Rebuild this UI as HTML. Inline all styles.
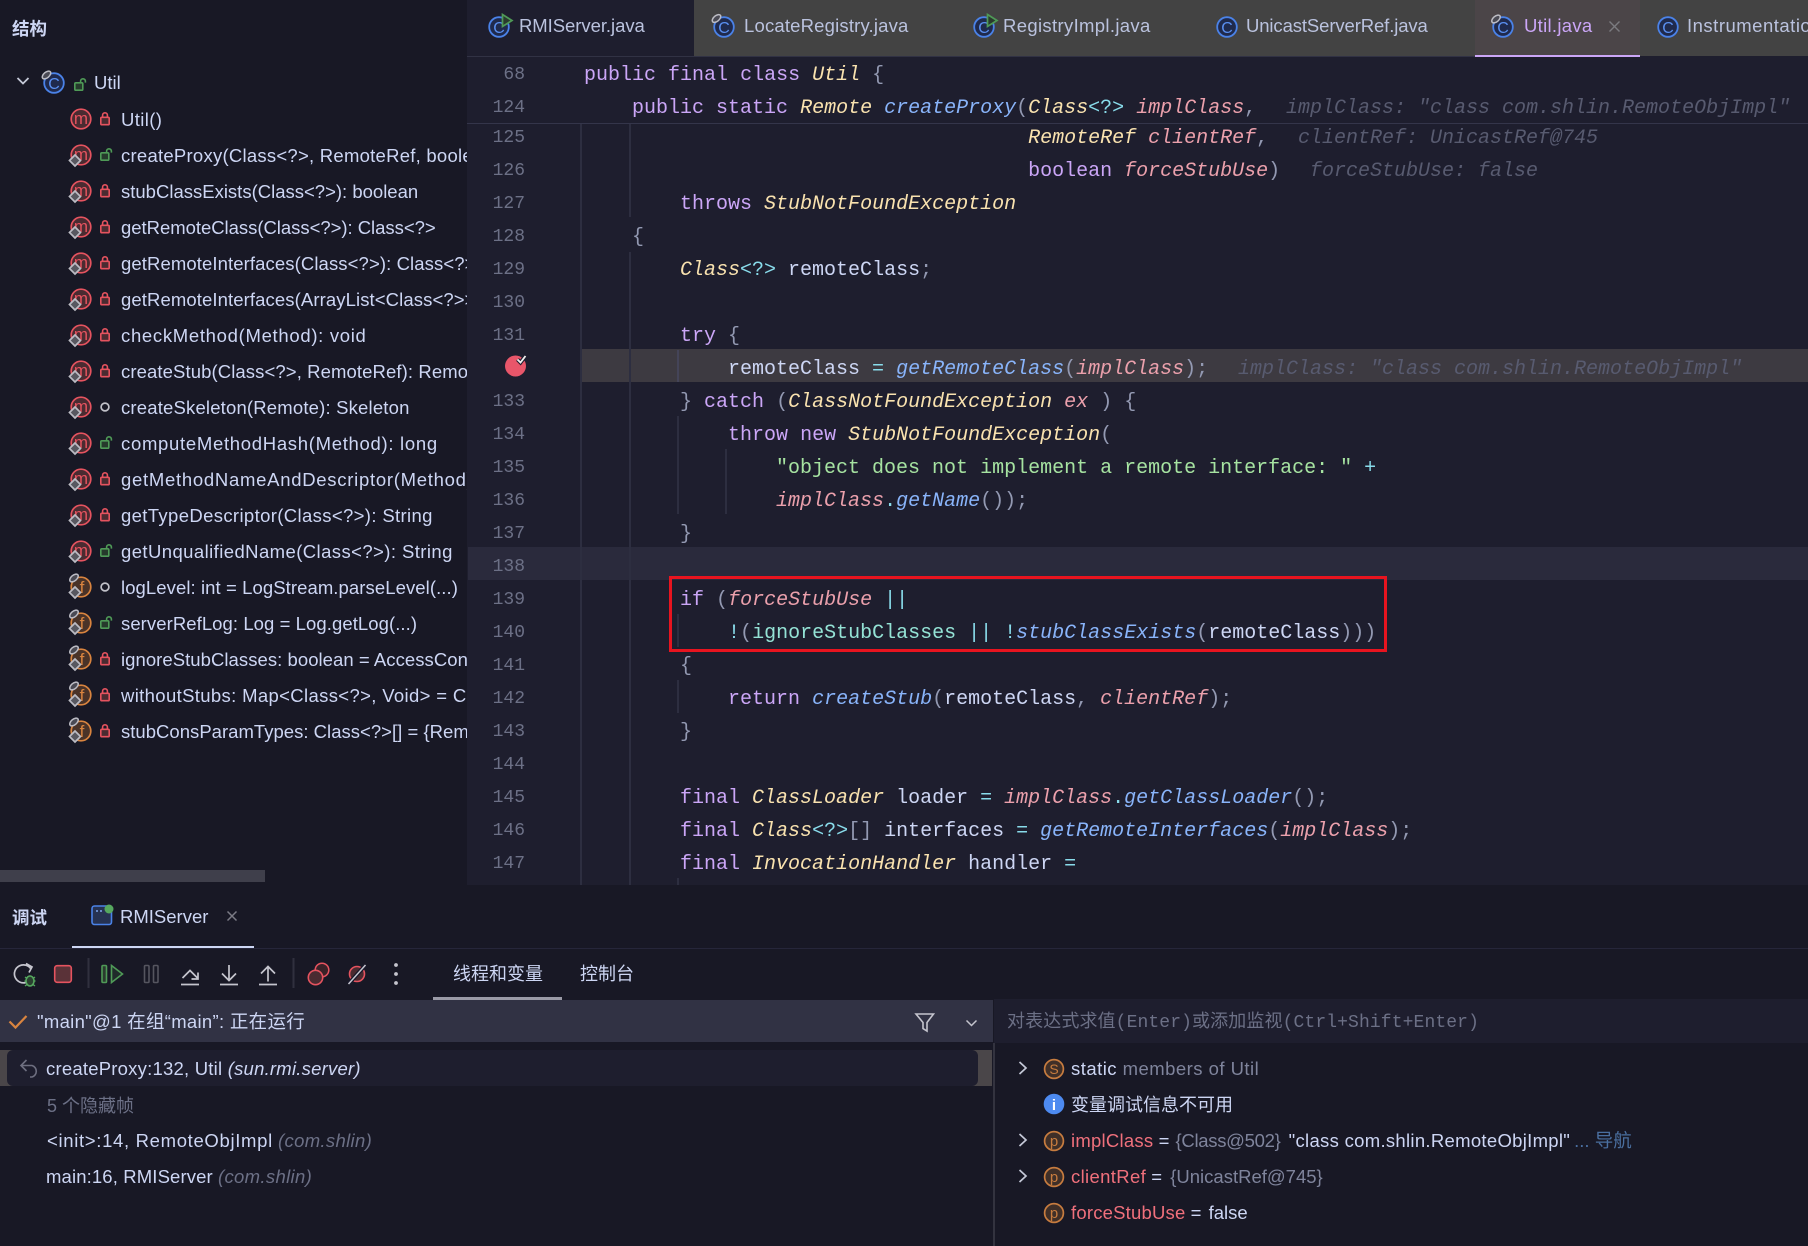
<!DOCTYPE html>
<html lang="zh">
<head>
<meta charset="utf-8">
<title>Util.java</title>
<style>
html,body{margin:0;padding:0;background:#181825;}
#root{position:relative;width:1808px;height:1246px;overflow:hidden;background:#181825;color:#cdd6f4;font-family:"Liberation Sans","Noto Sans CJK SC",sans-serif;font-size:18.5px;}
.a{position:absolute;}
.t{position:absolute;white-space:pre;line-height:24px;height:24px;}
#tree .t{margin-top:1px}
.c{position:absolute;left:584px;margin-top:2px;white-space:pre;font-family:"Liberation Mono","Noto Sans CJK SC",monospace;font-size:20px;line-height:33px;height:33px;color:#cdd6f4;}
.n{position:absolute;left:465px;margin-top:2px;width:60px;text-align:right;font-family:"Liberation Mono",monospace;font-size:18px;line-height:33px;height:33px;color:#6c7086;}
.g{position:absolute;width:2px;background:#2d2e40;}
.k{color:#cba6f7}
.y{color:#f9e2af;font-style:italic}
.b{color:#89b4fa;font-style:italic}
.r{color:#eba0ac;font-style:italic}
.p{color:#9399b2}
.o{color:#89dceb}
.s{color:#a6e3a1}
.f{color:#94e2d5}
.h{color:#585b70;font-style:italic;position:absolute;margin-top:2px;white-space:pre;font-family:"Liberation Mono",monospace;font-size:20px;line-height:33px;height:33px;}
.tab{color:#bac2de;}
.dim{color:#6c7086}
.i{font-style:italic;color:#6c7086;letter-spacing:.33px}
svg{position:absolute;left:0;top:0;overflow:visible}
svg text{font-family:"Liberation Sans",sans-serif}
</style>
</head>
<body>
<div id="root">

<!-- left structure panel -->
<div id="tree" class="a" style="left:0;top:0;width:467px;height:885px;background:#181825;overflow:hidden">
  <div class="t" style="left:12px;top:17px;margin-top:0;font-weight:bold;font-size:17.5px">结构</div>
  <div class="t" style="left:94px;top:71px;margin-top:0">Util</div>
  <div class="t" style="left:121px;top:107px;letter-spacing:.38px">Util()</div>
  <div class="t" style="left:121px;top:143px;letter-spacing:.25px">createProxy(Class&lt;?&gt;, RemoteRef, boolean, boolean)</div>
  <div class="t" style="left:121px;top:179px">stubClassExists(Class&lt;?&gt;): boolean</div>
  <div class="t" style="left:121px;top:215px;letter-spacing:-.03px">getRemoteClass(Class&lt;?&gt;): Class&lt;?&gt;</div>
  <div class="t" style="left:121px;top:251px;letter-spacing:.1px">getRemoteInterfaces(Class&lt;?&gt;): Class&lt;?&gt;[]</div>
  <div class="t" style="left:121px;top:287px;letter-spacing:.1px">getRemoteInterfaces(ArrayList&lt;Class&lt;?&gt;&gt;, Class)</div>
  <div class="t" style="left:121px;top:323px;letter-spacing:.69px">checkMethod(Method): void</div>
  <div class="t" style="left:121px;top:359px;letter-spacing:.1px">createStub(Class&lt;?&gt;, RemoteRef): Remote</div>
  <div class="t" style="left:121px;top:395px;letter-spacing:.18px">createSkeleton(Remote): Skeleton</div>
  <div class="t" style="left:121px;top:431px;letter-spacing:.7px">computeMethodHash(Method): long</div>
  <div class="t" style="left:121px;top:467px;letter-spacing:.72px">getMethodNameAndDescriptor(Method): String</div>
  <div class="t" style="left:121px;top:503px;letter-spacing:.36px">getTypeDescriptor(Class&lt;?&gt;): String</div>
  <div class="t" style="left:121px;top:539px;letter-spacing:.42px">getUnqualifiedName(Class&lt;?&gt;): String</div>
  <div class="t" style="left:121px;top:575px;letter-spacing:.08px">logLevel: int = LogStream.parseLevel(...)</div>
  <div class="t" style="left:121px;top:611px;letter-spacing:.07px">serverRefLog: Log = Log.getLog(...)</div>
  <div class="t" style="left:121px;top:647px;letter-spacing:.05px">ignoreStubClasses: boolean = AccessController</div>
  <div class="t" style="left:121px;top:683px;letter-spacing:.35px">withoutStubs: Map&lt;Class&lt;?&gt;, Void&gt; = Collections</div>
  <div class="t" style="left:121px;top:719px;letter-spacing:.02px">stubConsParamTypes: Class&lt;?&gt;[] = {RemoteRef}</div>
  <div class="a" style="left:0;top:870px;width:265px;height:12px;background:#3f3f4b"></div>
</div>

<!-- editor -->
<div class="a" style="left:467px;top:0;width:1341px;height:885px;background:#1e1e2e"></div>
<div class="a" style="left:694px;top:0;width:1114px;height:56px;background:#434343"></div>
<div class="a" style="left:1475px;top:0;width:165px;height:55px;background:#4b4548"></div>
<div class="a" style="left:1475px;top:55px;width:165px;height:2px;background:#cba6f7"></div>
<div class="a" style="left:467px;top:56px;width:1008px;height:1px;background:#313244"></div>

<div class="t tab" style="left:519px;top:14px;letter-spacing:-.05px">RMIServer.java</div>
<div class="t tab" style="left:744px;top:14px;letter-spacing:.18px">LocateRegistry.java</div>
<div class="t tab" style="left:1003px;top:14px;letter-spacing:.34px">RegistryImpl.java</div>
<div class="t tab" style="left:1246px;top:14px;letter-spacing:-.11px">UnicastServerRef.java</div>
<div class="t" style="left:1524px;top:14px;color:#cba6f7;letter-spacing:.3px">Util.java</div>
<div class="t tab" style="left:1687px;top:14px;letter-spacing:.5px">Instrumentation</div>

<!-- highlights -->
<div class="a" style="left:468px;top:547px;width:1340px;height:33px;background:#2a2a3c"></div>
<div class="a" style="left:581px;top:349px;width:1227px;height:33px;background:#3d3a41"></div>

<!-- indent guides -->
<div class="g" style="left:580px;top:123px;height:762px"></div>
<div class="g" style="left:629px;top:123px;height:94px"></div>
<div class="g" style="left:629px;top:252px;height:633px"></div>
<div class="g" style="left:677px;top:350px;height:32px;background:#444458"></div>
<div class="g" style="left:677px;top:416px;height:98px"></div>
<div class="g" style="left:725px;top:449px;height:65px"></div>
<div class="g" style="left:677px;top:614px;height:33px"></div>
<div class="g" style="left:677px;top:680px;height:33px"></div>
<div class="g" style="left:677px;top:878px;height:7px"></div>

<!-- line numbers -->
<div class="n" style="top:120px">125</div>
<div class="n" style="top:153px">126</div>
<div class="n" style="top:186px">127</div>
<div class="n" style="top:219px">128</div>
<div class="n" style="top:252px">129</div>
<div class="n" style="top:285px">130</div>
<div class="n" style="top:318px">131</div>
<div class="n" style="top:384px">133</div>
<div class="n" style="top:417px">134</div>
<div class="n" style="top:450px">135</div>
<div class="n" style="top:483px">136</div>
<div class="n" style="top:516px">137</div>
<div class="n" style="top:549px">138</div>
<div class="n" style="top:582px">139</div>
<div class="n" style="top:615px">140</div>
<div class="n" style="top:648px">141</div>
<div class="n" style="top:681px">142</div>
<div class="n" style="top:714px">143</div>
<div class="n" style="top:747px">144</div>
<div class="n" style="top:780px">145</div>
<div class="n" style="top:813px">146</div>
<div class="n" style="top:846px">147</div>

<!-- code -->
<div class="c" style="top:120px">                                     <span class="y">RemoteRef</span> <span class="r">clientRef</span><span class="p">,</span></div>
<div class="h" style="left:1298px;top:120px">clientRef: UnicastRef@745</div>
<div class="c" style="top:153px">                                     <span class="k">boolean</span> <span class="r">forceStubUse</span><span class="p">)</span></div>
<div class="h" style="left:1310px;top:153px">forceStubUse: false</div>
<div class="c" style="top:186px">        <span class="k">throws</span> <span class="y">StubNotFoundException</span></div>
<div class="c" style="top:219px">    <span class="p">{</span></div>
<div class="c" style="top:252px">        <span class="y">Class</span><span class="o">&lt;?&gt;</span> remoteClass<span class="p">;</span></div>
<div class="c" style="top:318px">        <span class="k">try</span> <span class="p">{</span></div>
<div class="c" style="top:351px">            remoteClass <span class="o">=</span> <span class="b">getRemoteClass</span><span class="p">(</span><span class="r">implClass</span><span class="p">);</span></div>
<div class="h" style="left:1238px;top:351px">implClass: "class com.shlin.RemoteObjImpl"</div>
<div class="c" style="top:384px">        <span class="p">}</span> <span class="k">catch</span> <span class="p">(</span><span class="y">ClassNotFoundException</span> <span class="r">ex</span> <span class="p">) {</span></div>
<div class="c" style="top:417px">            <span class="k">throw</span> <span class="k">new</span> <span class="y">StubNotFoundException</span><span class="p">(</span></div>
<div class="c" style="top:450px">                <span class="s">"object does not implement a remote interface: "</span> <span class="o">+</span></div>
<div class="c" style="top:483px">                <span class="r">implClass</span><span class="o">.</span><span class="b">getName</span><span class="p">());</span></div>
<div class="c" style="top:516px">        <span class="p">}</span></div>
<div class="c" style="top:582px">        <span class="k">if</span> <span class="p">(</span><span class="r">forceStubUse</span> <span class="o">||</span></div>
<div class="c" style="top:615px">            <span class="o">!</span><span class="p">(</span><span class="f">ignoreStubClasses</span> <span class="o">||</span> <span class="o">!</span><span class="b">stubClassExists</span><span class="p">(</span>remoteClass<span class="p">)))</span></div>
<div class="c" style="top:648px">        <span class="p">{</span></div>
<div class="c" style="top:681px">            <span class="k">return</span> <span class="b">createStub</span><span class="p">(</span>remoteClass<span class="p">,</span> <span class="r">clientRef</span><span class="p">);</span></div>
<div class="c" style="top:714px">        <span class="p">}</span></div>
<div class="c" style="top:780px">        <span class="k">final</span> <span class="y">ClassLoader</span> loader <span class="o">=</span> <span class="r">implClass</span><span class="o">.</span><span class="b">getClassLoader</span><span class="p">();</span></div>
<div class="c" style="top:813px">        <span class="k">final</span> <span class="y">Class</span><span class="o">&lt;?&gt;</span><span class="p">[]</span> interfaces <span class="o">=</span> <span class="b">getRemoteInterfaces</span><span class="p">(</span><span class="r">implClass</span><span class="p">);</span></div>
<div class="c" style="top:846px">        <span class="k">final</span> <span class="y">InvocationHandler</span> handler <span class="o">=</span></div>

<!-- sticky lines -->
<div class="a" style="left:467px;top:57px;width:1341px;height:66px;background:#1e1e2e"></div>
<div class="a" style="left:467px;top:123px;width:1341px;height:1px;background:#34354a"></div>
<div class="n" style="top:57px">68</div>
<div class="n" style="top:90px">124</div>
<div class="c" style="top:57px"><span class="k">public</span> <span class="k">final</span> <span class="k">class</span> <span class="y">Util</span> <span class="p">{</span></div>
<div class="c" style="top:90px">    <span class="k">public</span> <span class="k">static</span> <span class="y">Remote</span> <span class="b">createProxy</span><span class="p">(</span><span class="y">Class</span><span class="o">&lt;?&gt;</span> <span class="r">implClass</span><span class="p">,</span></div>
<div class="h" style="left:1286px;top:90px">implClass: "class com.shlin.RemoteObjImpl"</div>

<!-- red annotation box -->
<div class="a" style="left:669px;top:576px;width:712px;height:70px;border:3px solid #e8141f"></div>

<!-- debug panel -->
<div class="a" style="left:0;top:948px;width:1808px;height:1px;background:#26263a"></div>
<div class="t" style="left:12px;top:906px;font-weight:bold;font-size:17.5px">调试</div>
<div class="t" style="left:120px;top:905px">RMIServer</div>
<div class="a" style="left:72px;top:946px;width:182px;height:2px;background:#cdd6f4"></div>
<div class="t" style="left:453px;top:962px;font-size:18px">线程和变量</div>
<div class="t" style="left:580px;top:962px;font-size:18px">控制台</div>
<div class="a" style="left:433px;top:997px;width:129px;height:3px;background:#9a9aa6"></div>

<!-- thread row -->
<div class="a" style="left:0;top:1000px;width:993px;height:42px;background:#313244"></div>
<div class="t" style="left:37px;top:1010px;letter-spacing:.3px">"main"@1 在组“main”: 正在运行</div>

<!-- eval bar -->
<div class="a" style="left:994px;top:999px;width:814px;height:44px;background:#1e1e2e"></div>
<div class="a" style="left:993px;top:1043px;width:2px;height:203px;background:#33333f"></div>
<div class="t" style="left:1007px;top:1011px;color:#6c7086;font-family:'Liberation Mono','Noto Sans CJK SC',monospace;font-size:18px;letter-spacing:.11px">对表达式求值(Enter)或添加监视(Ctrl+Shift+Enter)</div>

<!-- selected frame -->
<div class="a" style="left:0;top:1050px;width:992px;height:36px;background:#4a4649"></div>
<div class="a" style="left:7px;top:1050px;width:971px;height:36px;background:#1e1e2e;border-radius:6px"></div>
<div class="t" style="left:46px;top:1057px;letter-spacing:.22px">createProxy:132, Util <span style="font-style:italic">(sun.rmi.server)</span></div>
<div class="t dim" style="left:47px;top:1094px;font-size:18px">5 个隐藏帧</div>
<div class="t" style="left:47px;top:1129px"><span style="letter-spacing:.67px">&lt;init&gt;:14, RemoteObjImpl</span> <span class="i">(com.shlin)</span></div>
<div class="t" style="left:46px;top:1165px"><span style="letter-spacing:.13px">main:16, RMIServer</span> <span class="i">(com.shlin)</span></div>

<!-- variables -->
<div class="t" style="left:1071px;top:1057px;letter-spacing:.47px">static <span class="dim" style="color:#7f849c">members of Util</span></div>
<div class="t" style="left:1071px;top:1093px;font-size:18px">变量调试信息不可用</div>
<div class="t" style="left:1071px;top:1129px"><span style="color:#f0707c;letter-spacing:.25px">implClass</span> = <span style="color:#7f849c;margin-left:1px;letter-spacing:-.3px">{Class@502}</span> <span style="letter-spacing:.3px;margin-left:3px">"class com.shlin.RemoteObjImpl"</span><span style="color:#4a6fa0;margin-left:4px">... 导航</span></div>
<div class="t" style="left:1071px;top:1165px"><span style="color:#f0707c;letter-spacing:.35px">clientRef</span> = <span style="color:#7f849c;margin-left:3px">{UnicastRef@745}</span></div>
<div class="t" style="left:1071px;top:1201px"><span style="color:#f0707c;letter-spacing:.2px">forceStubUse</span> = <span style="margin-left:2px">false</span></div>

<!-- icon layer -->
<svg width="1808" height="1246" viewBox="0 0 1808 1246" fill="none">
  <defs>
    <g id="mc"><circle r="9.8" fill="#4a2b31" stroke="#e5535f" stroke-width="1.7"/></g>
    <g id="fc"><circle r="9.8" fill="#4a3328" stroke="#d9843f" stroke-width="1.7"/></g>
    <g id="dia"><path d="M-5.500 0.500L0 -5L5.500 0.500L0 6Z" fill="#585860" stroke="#bcbcc4" stroke-width="1.7"/></g>
    <g id="pin"><ellipse rx="5" ry="2.8" transform="rotate(-40)" fill="#4a4a54" stroke="#bcbcc4" stroke-width="1.5"/></g>
    <g id="lr"><rect x="-4.2" y="-1.7" width="8.4" height="7.4" rx="1" fill="#4a2b31" stroke="#e5535f" stroke-width="1.6"/><path d="M-2.4 -1.7V-3.8a2.4 2.4 0 0 1 4.8 0V-1.7" stroke="#e5535f" stroke-width="1.6"/></g>
    <g id="lg"><rect x="-4.2" y="-2.2" width="8" height="7.4" rx="1" fill="#263a2c" stroke="#4f9a57" stroke-width="1.6"/><path d="M1.6 -2.2V-3.8a2.4 2.4 0 0 1 4.8 0V-2.4" stroke="#4f9a57" stroke-width="1.6"/></g>
    <g id="lp"><circle r="3.9" stroke="#c0c0c8" stroke-width="1.7"/></g>
    <g id="cc"><circle r="9.8" fill="#1f2a4d" stroke="#4a82e8" stroke-width="1.8"/></g>
    <g id="pv"><circle r="9.4" fill="#3f2f28" stroke="#c77c3f" stroke-width="1.7"/></g>
  </defs>

  <!-- Tree chevron and root -->
  <path d="M17.5 78l5.5 5.500 5.500-5.500" stroke="#c5c9d8" stroke-width="1.8"/>
  <use href="#cc" x="54" y="83"/><text x="54" y="89" font-size="16" fill="#5a8ff0" text-anchor="middle">C</text>
  <use href="#pin" x="46.5" y="75"/>
  <use href="#lg" x="79" y="85"/>

  <!-- method rows -->
  <g><use href="#mc" x="81" y="119"/><text x="81" y="124" font-size="17" fill="#e5535f" text-anchor="middle">m</text><use href="#lr" x="105" y="119"/></g>
  <g><use href="#mc" x="81" y="155"/><text x="81" y="160" font-size="17" fill="#e5535f" text-anchor="middle">m</text><use href="#dia" x="75" y="160"/><use href="#lg" x="105" y="155"/></g>
  <g><use href="#mc" x="81" y="191"/><text x="81" y="196" font-size="17" fill="#e5535f" text-anchor="middle">m</text><use href="#dia" x="75" y="196"/><use href="#lr" x="105" y="191"/></g>
  <g><use href="#mc" x="81" y="227"/><text x="81" y="232" font-size="17" fill="#e5535f" text-anchor="middle">m</text><use href="#dia" x="75" y="232"/><use href="#lr" x="105" y="227"/></g>
  <g><use href="#mc" x="81" y="263"/><text x="81" y="268" font-size="17" fill="#e5535f" text-anchor="middle">m</text><use href="#dia" x="75" y="268"/><use href="#lr" x="105" y="263"/></g>
  <g><use href="#mc" x="81" y="299"/><text x="81" y="304" font-size="17" fill="#e5535f" text-anchor="middle">m</text><use href="#dia" x="75" y="304"/><use href="#lr" x="105" y="299"/></g>
  <g><use href="#mc" x="81" y="335"/><text x="81" y="340" font-size="17" fill="#e5535f" text-anchor="middle">m</text><use href="#dia" x="75" y="340"/><use href="#lr" x="105" y="335"/></g>
  <g><use href="#mc" x="81" y="371"/><text x="81" y="376" font-size="17" fill="#e5535f" text-anchor="middle">m</text><use href="#dia" x="75" y="376"/><use href="#lr" x="105" y="371"/></g>
  <g><use href="#mc" x="81" y="407"/><text x="81" y="412" font-size="17" fill="#e5535f" text-anchor="middle">m</text><use href="#dia" x="75" y="412"/><use href="#lp" x="105" y="407"/></g>
  <g><use href="#mc" x="81" y="443"/><text x="81" y="448" font-size="17" fill="#e5535f" text-anchor="middle">m</text><use href="#dia" x="75" y="448"/><use href="#lg" x="105" y="443"/></g>
  <g><use href="#mc" x="81" y="479"/><text x="81" y="484" font-size="17" fill="#e5535f" text-anchor="middle">m</text><use href="#dia" x="75" y="484"/><use href="#lr" x="105" y="479"/></g>
  <g><use href="#mc" x="81" y="515"/><text x="81" y="520" font-size="17" fill="#e5535f" text-anchor="middle">m</text><use href="#dia" x="75" y="520"/><use href="#lr" x="105" y="515"/></g>
  <g><use href="#mc" x="81" y="551"/><text x="81" y="556" font-size="17" fill="#e5535f" text-anchor="middle">m</text><use href="#dia" x="75" y="556"/><use href="#lg" x="105" y="551"/></g>

  <!-- field rows -->
  <g><use href="#fc" x="81" y="587"/><text x="82" y="593" font-size="17" fill="#d9843f" text-anchor="middle">f</text><use href="#pin" x="74" y="578"/><use href="#dia" x="75" y="592"/><use href="#lp" x="105" y="587"/></g>
  <g><use href="#fc" x="81" y="623"/><text x="82" y="629" font-size="17" fill="#d9843f" text-anchor="middle">f</text><use href="#pin" x="74" y="614"/><use href="#dia" x="75" y="628"/><use href="#lg" x="105" y="623"/></g>
  <g><use href="#fc" x="81" y="659"/><text x="82" y="665" font-size="17" fill="#d9843f" text-anchor="middle">f</text><use href="#pin" x="74" y="650"/><use href="#dia" x="75" y="664"/><use href="#lr" x="105" y="659"/></g>
  <g><use href="#fc" x="81" y="695"/><text x="82" y="701" font-size="17" fill="#d9843f" text-anchor="middle">f</text><use href="#pin" x="74" y="686"/><use href="#dia" x="75" y="700"/><use href="#lr" x="105" y="695"/></g>
  <g><use href="#fc" x="81" y="731"/><text x="82" y="737" font-size="17" fill="#d9843f" text-anchor="middle">f</text><use href="#pin" x="74" y="722"/><use href="#dia" x="75" y="736"/><use href="#lr" x="105" y="731"/></g>

  <!-- tab icons -->
  <g><use href="#cc" x="499" y="27"/><text x="499" y="33" font-size="16" fill="#5a8ff0" text-anchor="middle">C</text><path d="M502.5 14.5L512 20.5L502.5 26.5Z" fill="#2a3a2e" stroke="#4f9a57" stroke-width="1.7"/></g>
  <g><use href="#cc" x="724" y="27"/><text x="724" y="33" font-size="16" fill="#5a8ff0" text-anchor="middle">C</text><use href="#pin" x="716.5" y="18.5"/></g>
  <g><use href="#cc" x="984" y="27"/><text x="984" y="33" font-size="16" fill="#5a8ff0" text-anchor="middle">C</text><path d="M987.5 14.5L997 20.5L987.5 26.5Z" fill="#2a3a2e" stroke="#4f9a57" stroke-width="1.7"/></g>
  <g><use href="#cc" x="1227" y="27"/><text x="1227" y="33" font-size="16" fill="#5a8ff0" text-anchor="middle">C</text></g>
  <g><use href="#cc" x="1503" y="27"/><text x="1503" y="33" font-size="16" fill="#5a8ff0" text-anchor="middle">C</text><use href="#pin" x="1496" y="19"/></g>
  <path d="M1609.5 21.5l10 10M1619.5 21.5l-10 10" stroke="#7b7b80" stroke-width="1.4"/>
  <g><use href="#cc" x="1668" y="27"/><text x="1668" y="33" font-size="16" fill="#5a8ff0" text-anchor="middle">C</text></g>

  <!-- breakpoint -->
  <circle cx="515.5" cy="366" r="10.5" fill="#e8566a"/>
  <path d="M517.5 359.5l3 3 5-6.5" stroke="#1e1e2e" stroke-width="4"/>
  <path d="M517.5 359.5l3 3 5-6.5" stroke="#f0f0f0" stroke-width="1.8"/>

  <!-- debug tab -->
  <rect x="92" y="906" width="19.5" height="18.5" rx="2.5" fill="#263252" stroke="#4a82e8" stroke-width="1.6"/>
  <path d="M96 911h2M100 911h2" stroke="#7fa8f0" stroke-width="1.4"/>
  <circle cx="109" cy="909" r="4.5" fill="#56a85f"/>
  <path d="M227.500 911.500l9 9M236.500 911.500l-9 9" stroke="#7b7b85" stroke-width="1.5"/>

  <!-- toolbar -->
  <path d="M31 969A9 9 0 1 0 26 982.500" stroke="#c5c5ce" stroke-width="1.7"/>
  <path d="M26 963.500l6 3.500-3 5.500" stroke="#c5c5ce" stroke-width="1.7"/>
  <ellipse cx="30" cy="981" rx="4" ry="5" fill="#2a4030" stroke="#56a85f" stroke-width="1.6"/>
  <path d="M25 977l2 1.500M35 977l-2 1.500M24.500 981h2M35.500 981h-2M25 986l2-1.500M35 986l-2-1.500" stroke="#56a85f" stroke-width="1.3"/>
  <rect x="54.700" y="965.700" width="16.600" height="16.600" rx="2.500" fill="#5a3238" stroke="#e5535f" stroke-width="1.6"/>
  <rect x="87.500" y="958" width="2" height="30" fill="#30303e"/>
  <rect x="102" y="965.500" width="4.500" height="17" rx="1" fill="#2a3a2e" stroke="#4f9a57" stroke-width="1.6"/>
  <path d="M111.500 965.500L122.500 974L111.500 982.500Z" fill="#202a2a" stroke="#4f9a57" stroke-width="1.6"/>
  <rect x="144.500" y="965.500" width="4.500" height="17" rx="1" stroke="#55555f" stroke-width="1.6"/>
  <rect x="153.500" y="965.500" width="4.500" height="17" rx="1" stroke="#55555f" stroke-width="1.6"/>
  <path d="M182.500 978l7.500-7.500 8 8M198 972.500v6.500h-6.500" stroke="#c5c5ce" stroke-width="1.7"/>
  <path d="M181 984.500h18" stroke="#c5c5ce" stroke-width="1.7"/>
  <path d="M229 965v15.500M222 973.500l7 7 7-7" stroke="#c5c5ce" stroke-width="1.7"/>
  <path d="M220 984.500h18" stroke="#c5c5ce" stroke-width="1.7"/>
  <path d="M268 981.500V966.500M261 973.500l7-7 7 7" stroke="#c5c5ce" stroke-width="1.7"/>
  <path d="M259 984.500h18" stroke="#c5c5ce" stroke-width="1.7"/>
  <rect x="292.500" y="958" width="2" height="30" fill="#30303e"/>
  <circle cx="322" cy="970" r="6.800" fill="#3a2228" stroke="#e5535f" stroke-width="1.500"/>
  <circle cx="315.500" cy="977.500" r="7.200" fill="#4a2b31" stroke="#e5535f" stroke-width="1.600"/>
  <circle cx="357" cy="974" r="7.500" fill="#4a2b31" stroke="#e5535f" stroke-width="1.600"/>
  <path d="M348.500 984l17-19" stroke="#18182a" stroke-width="4"/>
  <path d="M348.500 984l17-19" stroke="#c5c5ce" stroke-width="1.500"/>
  <circle cx="396" cy="965" r="1.900" fill="#c5c5ce"/>
  <circle cx="396" cy="974" r="1.900" fill="#c5c5ce"/>
  <circle cx="396" cy="983" r="1.900" fill="#c5c5ce"/>

  <!-- thread row icons -->
  <path d="M9.500 1021.500L15.500 1027.500L26.500 1016" stroke="#d9843f" stroke-width="2.200"/>
  <path d="M916 1014H933.500L927 1022.500V1031L923 1028.500V1022.500Z" stroke="#c5c5ce" stroke-width="1.600"/>
  <path d="M966.500 1020.500l5 5 5-5" stroke="#c5c5ce" stroke-width="1.500"/>

  <!-- return arrow -->
  <path d="M26.500 1060l-5.500 5.500 5.500 5.500M21 1065.500h11a6 6 0 0 1 0 11.500h-2" stroke="#6e6f80" stroke-width="1.600"/>

  <!-- variable icons -->
  <path d="M1019.500 1062l6.500 6-6.500 6" stroke="#c5c9d8" stroke-width="1.700"/>
  <path d="M1019.500 1134l6.500 6-6.500 6" stroke="#c5c9d8" stroke-width="1.700"/>
  <path d="M1019.500 1170l6.500 6-6.500 6" stroke="#c5c9d8" stroke-width="1.700"/>
  <use href="#pv" x="1054" y="1069"/><text x="1054" y="1074" font-size="14" fill="#c77c3f" text-anchor="middle">S</text>
  <circle cx="1054" cy="1104" r="10.300" fill="#4d8af0"/><text x="1054" y="1110" font-size="15" font-weight="bold" fill="#ffffff" text-anchor="middle">i</text>
  <use href="#pv" x="1054" y="1141"/><text x="1054" y="1146" font-size="15" fill="#c77c3f" text-anchor="middle">p</text>
  <use href="#pv" x="1054" y="1177"/><text x="1054" y="1182" font-size="15" fill="#c77c3f" text-anchor="middle">p</text>
  <use href="#pv" x="1054" y="1213"/><text x="1054" y="1218" font-size="15" fill="#c77c3f" text-anchor="middle">p</text>
</svg>

</div>
</body>
</html>
